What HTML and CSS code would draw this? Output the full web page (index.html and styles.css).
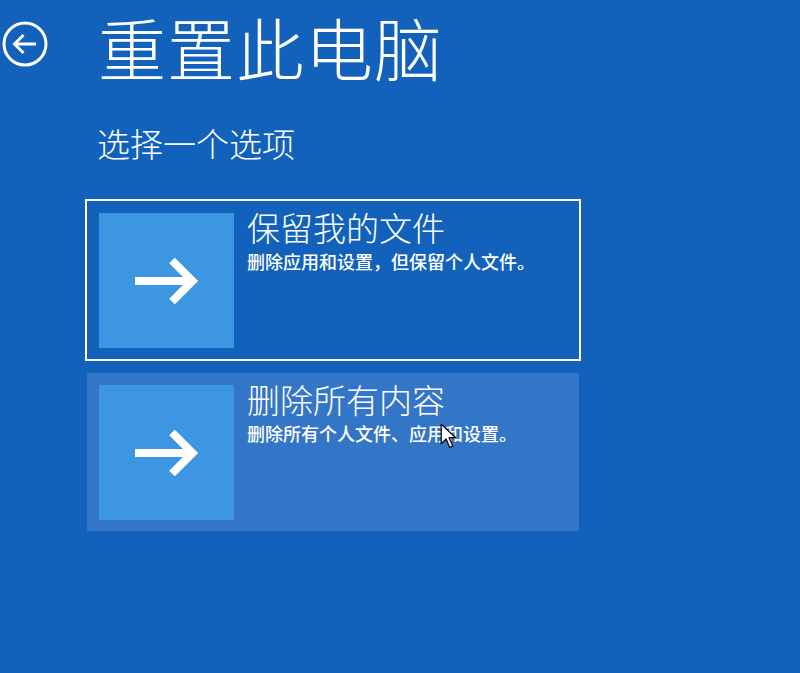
FILE: index.html
```html
<!DOCTYPE html>
<html lang="zh-CN">
  <head>
    <meta charset="UTF-8" />
    <meta name="viewport" content="width=device-width, initial-scale=1.0" />
    <title>重置此电脑</title>
    <link rel="stylesheet" href="styles.css">
  </head>
  <body>
    <div class="screen">
      <div class="header">
        <button class="back-btn" title="返回">
          <svg viewBox="0 0 46 46" width="46" height="46">
            <circle cx="23" cy="23" r="21" fill="none" stroke="#fff" stroke-width="3" />
            <path d="M34 23 H13 M21.5 14 L12.5 23 L21.5 32" fill="none" stroke="#fff" stroke-width="3" />
          </svg>
        </button>
        <h1 class="title">重置此电脑</h1>
      </div>

      <div class="content">
        <p class="subtitle">选择一个选项</p>

        <div class="options">
          <div class="option focused">
            <div class="option-icon">
              <svg viewBox="0 0 66 46" width="66" height="46">
                <path d="M0 23 H59 M37 2.5 L57.5 23 L37 43.5" fill="none" stroke="#fff" stroke-width="8" />
              </svg>
            </div>
            <div class="option-text">
              <div class="option-title">保留我的文件</div>
              <div class="option-desc">删除应用和设置，但保留个人文件。</div>
            </div>
          </div>

          <div class="option hovered">
            <div class="option-icon">
              <svg viewBox="0 0 66 46" width="66" height="46">
                <path d="M0 23 H59 M37 2.5 L57.5 23 L37 43.5" fill="none" stroke="#fff" stroke-width="8" />
              </svg>
            </div>
            <div class="option-text">
              <div class="option-title">删除所有内容</div>
              <div class="option-desc">删除所有个人文件、应用和设置。</div>
            </div>
            <!-- mouse pointer -->
            <svg class="cursor" viewBox="0 0 14 22" width="17" height="27">
              <path d="M1 1 V17 L5 13 L8 20 L10.5 19 L7.5 12 L13 12 Z" fill="#fff" stroke="#111" stroke-width="1.1" stroke-linejoin="round" />
            </svg>
          </div>
        </div>
      </div>
    </div>
  </body>
</html>
```

FILE: styles.css
```css
html,
body {
  margin: 0;
  height: 100%;
}
body {
  background-color: #1262bb;
  color: #fff;
  font-family: "Noto Sans CJK SC", "Noto Sans", sans-serif;
  overflow: hidden;
}
.screen {
  padding-top: 3px;
}
.header {
  display: flex;
  align-items: center;
}
.back-btn {
  flex: none;
  background: none;
  border: none;
  padding: 0;
  margin: -6px 0 0 2px;
  width: 46px;
  height: 46px;
  cursor: pointer;
}
.back-btn svg {
  display: block;
}
.title {
  flex: none;
  margin: 0 0 0 50px;
  padding-right: 4px;
  font-size: 68px;
  font-weight: 300;
  line-height: 88px;
  letter-spacing: 1px;
  white-space: nowrap;
}
.content {
  padding-left: 85px;
}
.subtitle {
  margin: 32px 0 36px 12px;
  font-size: 33px;
  font-weight: 300;
  line-height: 40px;
}
.options {
  display: flex;
  flex-direction: column;
  gap: 10px;
  width: 496px;
}
.option {
  position: relative;
  box-sizing: border-box;
  display: flex;
  gap: 13px;
  height: 162px;
  padding: 12px;
  border: 2px solid transparent;
  background-clip: padding-box;
  cursor: pointer;
}
.option.focused {
  border-color: #fff;
}
.option.hovered {
  background-color: #3375c6;
}
.option-icon {
  flex: none;
  width: 135px;
  height: 135px;
  background-color: #3d96e2;
  display: flex;
  align-items: center;
  justify-content: center;
}
.option-icon svg {
  display: block;
  margin-left: 2px;
}
.option-text {
  margin-top: -6px;
}
.option-title {
  font-size: 33px;
  font-weight: 300;
  line-height: 40px;
}
.option-desc {
  margin-top: 2px;
  font-size: 18px;
  font-weight: 500;
  line-height: 24px;
}
.cursor {
  position: absolute;
  left: 353px;
  top: 50px;
}
```
